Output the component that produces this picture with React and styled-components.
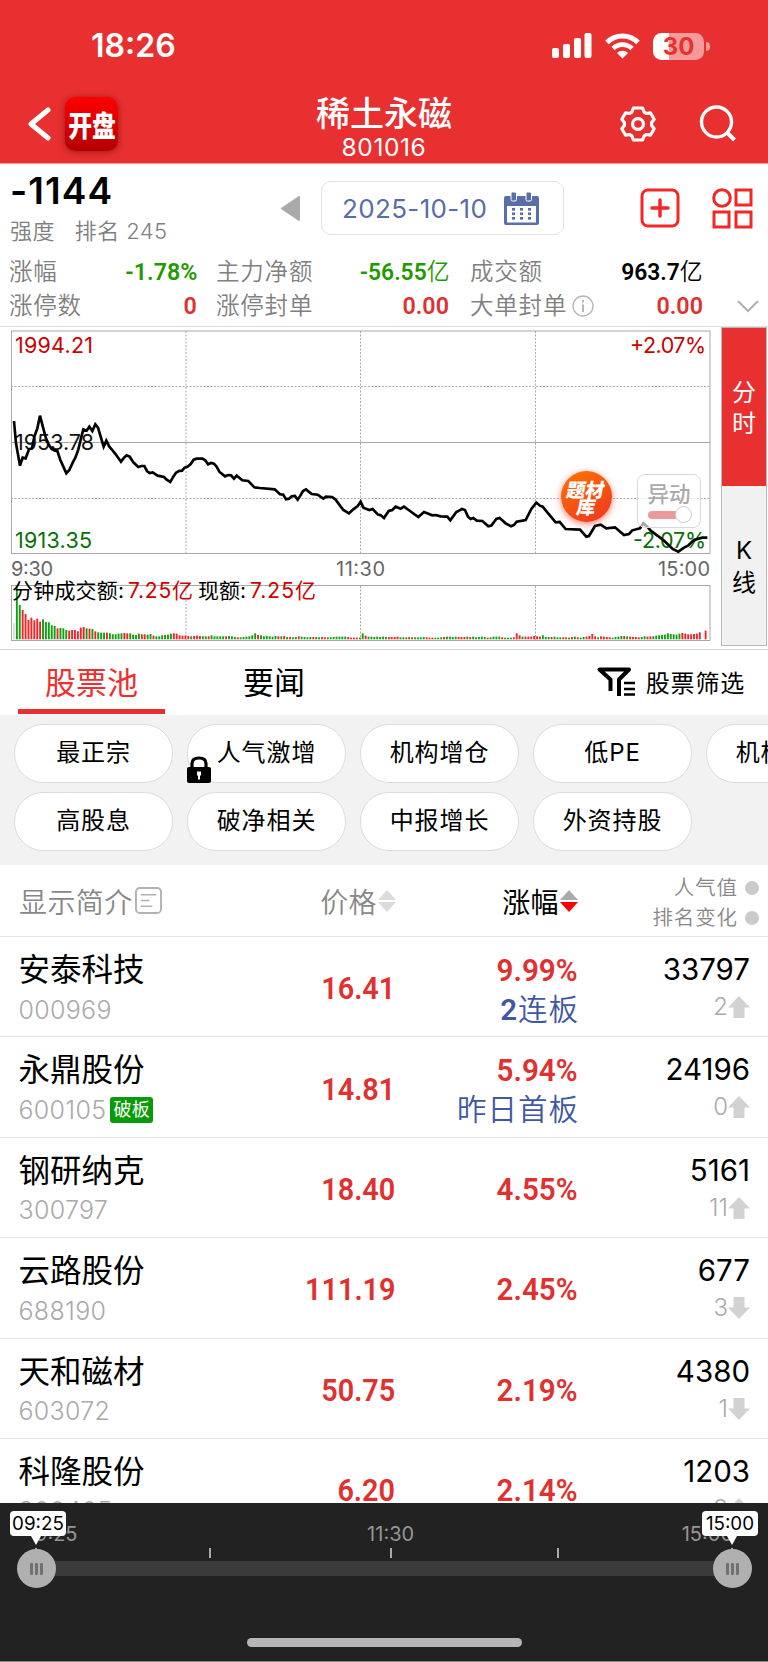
import React from "react";
import styled, { createGlobalStyle } from "styled-components";

const Global = createGlobalStyle`
  * { box-sizing: border-box; }
  body { margin: 0; background: #fff; }
`;

const LATIN = `Inter, "Noto Sans CJK SC", sans-serif`;

const Screen = styled.div`
  width: 768px;
  height: 1662px;
  overflow: hidden;
  display: flex;
  flex-direction: column;
  background: #fff;
  color: #000;
  font-family: ${LATIN};
  white-space: nowrap;
`;

/* ---------- header ---------- */
const Header = styled.header`
  height: 164px;
  flex: none;
  background: #e83030;
  color: #fff;
  border-bottom: 1px solid #f3a0a0;
`;
const StatusBar = styled.div`
  height: 92px;
  padding: 0 58px 0 91px;
  display: flex;
  align-items: center;
  justify-content: space-between;
`;
const Clock = styled.div`
  font-size: 32px;
  font-weight: 600;
  line-height: 40px;
`;
const StatusIcons = styled.div`
  display: flex;
  align-items: center;
  gap: 13px;
`;
const Battery = styled.div`
  width: 51px;
  height: 27px;
  border-radius: 8.5px;
  background: linear-gradient(90deg, #fff 31%, #f59a9a 31%);
  color: #e83030;
  font-size: 24px;
  font-weight: 700;
  line-height: 27px;
  text-align: center;
`;
const BatteryGroup = styled.div`
  display: flex;
  align-items: center;
  gap: 2px;
`;
const BatteryTip = styled.div`
  width: 4px;
  height: 9px;
  border-radius: 0 5px 5px 0;
  background: #f59a9a;
`;
const NavBar = styled.div`
  height: 71px;
  padding: 1px 32px 0 28px;
  display: grid;
  grid-template-columns: 1fr 160px 1fr;
`;
const NavLeft = styled.div`
  display: flex;
  align-items: flex-start;
  padding-top: 4px;
  gap: 14px;
`;
const AppBadge = styled.div`
  width: 53px;
  height: 54px;
  border-radius: 10px;
  background: linear-gradient(#ff0000, #b40000);
  box-shadow: 0 1px 7px rgba(90, 10, 10, 0.55);
  display: flex;
  align-items: center;
  justify-content: center;
  span {
    font: 900 29px/50px "Noto Sans CJK SC", sans-serif;
    transform: scaleX(0.82);
  }
`;
const TitleBlock = styled.div`
  display: flex;
  flex-direction: column;
  align-items: center;
  margin-left: 4px;
  padding-top: 1px;
`;
const Title = styled.h1`
  margin: 0;
  font-size: 34px;
  font-weight: 500;
  line-height: 40px;
`;
const TitleCode = styled.div`
  font-size: 24.5px;
  line-height: 26px;
  letter-spacing: 0.6px;
`;
const NavRight = styled.div`
  display: flex;
  justify-content: flex-end;
  align-items: flex-start;
  padding-top: 12px;
  gap: 42px;
`;

/* ---------- summary ---------- */
const Summary = styled.section`
  height: 162px;
  flex: none;
  padding-top: 8px;
`;
const SummaryTop = styled.div`
  height: 82px;
  display: flex;
  align-items: flex-start;
`;
const Score = styled.div`
  width: 281px;
  padding-left: 10px;
`;
const ScoreValue = styled.div`
  font-size: 37px;
  font-weight: 600;
  letter-spacing: 1.1px;
  line-height: 38px;
`;
const ScoreNote = styled.div`
  display: flex;
  gap: 20px;
  margin-top: 4px;
  font-size: 22px;
  line-height: 34px;
  color: #808080;
  font-weight: 350;
  letter-spacing: 0.4px;
`;
const PrevDay = styled.svg`
  margin: 24px 21px 0 0;
`;
const DateBox = styled.div`
  width: 243px;
  height: 54px;
  margin-top: 9px;
  padding: 0 24px 0 20px;
  border: 1px solid #e2e2e4;
  border-radius: 10px;
  display: flex;
  align-items: center;
  justify-content: space-between;
  font-size: 26px;
  letter-spacing: 0.35px;
  color: #596da6;
`;
const TopAction = styled.svg`
  margin: 16px 0 0 ${(p) => p.$gap}px;
`;
const Stats = styled.div`
  display: grid;
  grid-template-columns: 188px 252px 254px 1fr;
  column-gap: 0;
  padding-left: 9px;
  padding-top: 1px;
  grid-auto-rows: 34px;
`;
const Stat = styled.div`
  display: flex;
  justify-content: space-between;
  align-items: center;
  padding-left: ${(p) => p.$indent || 0}px;
  font-size: 23.5px;
  line-height: 34px;
`;
const StatLabel = styled.span`
  display: flex;
  align-items: center;
  gap: 5px;
  color: #808080;
  font-weight: 350;
  letter-spacing: 0.8px;
`;
const Din = styled.span`
  display: inline-block;
  font-family: Roboto, "Noto Sans CJK SC", sans-serif;
  font-weight: 600;
  font-size: ${(p) => p.$size || 24}px;
  color: ${(p) => p.$color || "#e03030"};
  transform: scaleX(${(p) => p.$scale || 0.97});
  transform-origin: right center;
  i {
    font-style: normal;
    font-weight: 350;
    letter-spacing: 0;
  }
`;
const MoreCell = styled.div`
  grid-column: 4;
  grid-row: 2;
  display: flex;
  align-items: center;
  padding-left: 34px;
`;

/* ---------- chart ---------- */
const ChartPanel = styled.section`
  height: 324px;
  flex: none;
  display: flex;
  border-top: 1px solid #dcdcdc;
  border-bottom: 1px solid #d8d8d8;
`;
const ChartArea = styled.div`
  position: relative;
  width: 721px;
`;
const SideTabs = styled.div`
  width: 46px;
  height: 319px;
  border: 1px solid #bababa;
  display: grid;
  grid-template-rows: 158px 1fr;
`;
const SideTab = styled.div`
  display: flex;
  flex-direction: column;
  align-items: center;
  justify-content: center;
  padding-top: 2px;
  font-size: 24px;
  line-height: 31.5px;
  background: ${(p) => (p.$active ? "#e83030" : "#f1f1f1")};
  color: ${(p) => (p.$active ? "#fff" : "#000")};
`;
const ThemeBall = styled.div`
  position: absolute;
  left: 561px;
  top: 144px;
  width: 51px;
  height: 51px;
  border-radius: 50%;
  background: linear-gradient(150deg, #ff7600, #ee3323);
  box-shadow: 0 2px 7px rgba(240, 60, 30, 0.65);
  color: #fff;
  display: flex;
  flex-direction: column;
  align-items: center;
  justify-content: center;
  font: 900 19px/17px "Noto Sans CJK SC", sans-serif;
  span { transform: skewX(-10deg); }
`;
const MoveSwitch = styled.div`
  position: absolute;
  left: 637px;
  top: 147px;
  width: 64px;
  height: 54px;
  border: 1px solid #d8d8d8;
  border-radius: 8px;
  background: rgba(255, 255, 255, 0.65);
  display: flex;
  flex-direction: column;
  align-items: center;
  color: #aaa;
  font-size: 21.5px;
  font-weight: 500;
  line-height: 38px;
`;
const SwitchTrack = styled.div`
  width: 44px;
  height: 15px;
  margin: -6px 0 0 2px;
  display: flex;
  align-items: center;
  justify-content: flex-end;
  position: relative;
  &::before {
    content: "";
    flex: 1;
    height: 8px;
    margin-right: -3px;
    border-radius: 4px;
    background: #e99a9a;
  }
  &::after {
    content: "";
    width: 15px;
    height: 15px;
    border-radius: 50%;
    border: 1px solid #ccc;
    background: #fff;
    z-index: 1;
  }
`;

/* ---------- tabs and chips ---------- */
const TabRow = styled.nav`
  height: 64.5px;
  flex: none;
  display: flex;
  padding: 0 23px 0 18px;
`;
const Tab = styled.div`
  width: ${(p) => p.$w}px;
  height: 64px;
  text-align: center;
  font-size: 31px;
  line-height: 65px;
  color: ${(p) => (p.$active ? "#ee2f2f" : "#000")};
  border-bottom: ${(p) => (p.$active ? "5px solid #e83030" : "none")};
`;
const FilterButton = styled.div`
  margin-left: auto;
  display: flex;
  align-items: center;
  gap: 10px;
  height: 63px;
  font-size: 24px;
  letter-spacing: 0.8px;
`;
const Chips = styled.div`
  height: 150.5px;
  flex: none;
  overflow: hidden;
  background: #f2f2f2;
  padding: 9px 0 0 14px;
  display: grid;
  grid-template-columns: repeat(5, 159px);
  grid-auto-rows: 59px;
  gap: 9px 14px;
`;
const Chip = styled.div`
  position: relative;
  border: 1px solid #dcdcdc;
  border-radius: 29px;
  background: #fff;
  display: flex;
  align-items: center;
  justify-content: center;
  font-size: 24px;
  letter-spacing: 0.9px;
  line-height: 56px;
  svg {
    position: absolute;
    left: -1px;
    bottom: -1px;
  }
`;

/* ---------- table ---------- */
const COLS = "266px 130px 182px 1fr";
const TableHead = styled.div`
  height: 72px;
  flex: none;
  display: grid;
  grid-template-columns: ${COLS};
  align-items: center;
  border-bottom: 1px solid #e6e6e6;
  font-size: 28px;
  letter-spacing: 0.4px;
  color: #888;
  font-weight: 350;
`;
const HeadCell = styled.div`
  display: flex;
  align-items: center;
  justify-content: ${(p) => (p.$left ? "flex-start" : "flex-end")};
  gap: ${(p) => (p.$left ? 2 : 1)}px;
  padding-left: ${(p) => (p.$left ? 19 : 0)}px;
  color: ${(p) => (p.$on ? "#000" : "inherit")};
  font-weight: ${(p) => (p.$on ? 400 : 350)};
`;
const RankHead = styled.div`
  display: flex;
  flex-direction: column;
  align-items: flex-end;
  padding: 4px 9px 0 0;
  font-size: 20.5px;
  letter-spacing: 0.9px;
  line-height: 30px;
`;
const RankHeadLine = styled.div`
  display: flex;
  align-items: center;
  gap: 7px;
  &::after {
    content: "";
    width: 14px;
    height: 14px;
    border-radius: 50%;
    background: #cbcbcb;
  }
`;
const Rows = styled.div`
  height: 566px;
  flex: none;
  overflow: hidden;
`;
const Row = styled.div`
  height: 100.4px;
  display: grid;
  grid-template-columns: ${COLS};
  border-bottom: 1px solid #e6e6e6;
`;
const NameCell = styled.div`
  padding: 12px 0 0 18.5px;
`;
const StockName = styled.div`
  font-size: 31.5px;
  line-height: 42px;
`;
const StockCode = styled.div`
  display: flex;
  align-items: center;
  gap: 4px;
  height: 37px;
  font-size: 25px;
  font-weight: 350;
  letter-spacing: 0.3px;
  color: #aaa;
`;
const Badge = styled.span`
  width: 43px;
  height: 26px;
  border-radius: 3px;
  background: #079b07;
  color: #fff;
  font-size: 18px;
  font-weight: 400;
  line-height: 25px;
  text-align: center;
`;
const PriceCell = styled.div`
  display: flex;
  align-items: center;
  justify-content: flex-end;
  padding-top: 3px;
  padding-right: 1px;
`;
const ChangeCell = styled.div`
  display: flex;
  flex-direction: column;
  align-items: flex-end;
  justify-content: ${(p) => (p.$tagged ? "flex-start" : "center")};
  padding-top: ${(p) => (p.$tagged ? 13 : 3)}px;
  line-height: 40px;
`;
const Streak = styled.div`
  font-family: Roboto, "Noto Sans CJK SC", sans-serif;
  font-size: 29.5px;
  letter-spacing: 1px;
  margin-right: -1px;
  line-height: 41px;
  font-weight: 350;
  color: #4057a5;
  b { font-weight: 600; }
`;
const HeatCell = styled.div`
  padding: 12px 18px 0 0;
  text-align: right;
`;
const Heat = styled.div`
  font-size: 29.5px;
  line-height: 41px;
`;
const RankMove = styled.div`
  display: flex;
  justify-content: flex-end;
  align-items: center;
  font-size: 24px;
  font-weight: 350;
  line-height: 34px;
  color: #aaa;
`;

/* ---------- time slider ---------- */
const Dock = styled.footer`
  height: 159px;
  flex: none;
  background: #222;
  border-bottom: 1px solid #888;
  position: relative;
`;
const DockLabels = styled.div`
  display: flex;
  justify-content: space-between;
  padding: 20px 35px 0 35px;
  font-size: 20px;
  line-height: 22px;
  color: #959595;
  span:nth-child(2) { margin-left: 22px; }
`;
const Ticks = styled.div`
  display: grid;
  grid-template-columns: 174px 181px 167px 174px 2px;
  margin: 3px 0 0 35px;
  i { width: 2px; height: 10px; background: #aaa; }
`;
const Track = styled.div`
  height: 15px;
  margin: 3px 36px 0;
  background: #3b3b3b;
`;
const Handle = styled.div`
  position: absolute;
  top: 8px;
  left: ${(p) => p.$x}px;
  width: 56px;
  display: flex;
  flex-direction: column;
  align-items: center;
`;
const Bubble = styled.div`
  width: 56px;
  height: 25px;
  margin-left: ${(p) => p.$shift}px;
  border-radius: 4px;
  background: #fff;
  color: #000;
  font-size: 18.8px;
  line-height: 26px;
  text-align: center;
`;
const Pointer = styled.div`
  border: 5.5px solid transparent;
  border-top: 9px solid #fff;
  border-bottom: 0;
`;
const Knob = styled.div`
  width: 39px;
  height: 39px;
  margin-top: 4px;
  border-radius: 50%;
  background: #b0b0b0;
  display: flex;
  align-items: center;
  justify-content: center;
  gap: 2px;
  i { width: 3px; height: 12px; border-radius: 1px; background: #707070; }
`;
const HomeBar = styled.div`
  width: 275px;
  height: 9px;
  border-radius: 5px;
  background: #b6b6b6;
  margin: 62px auto 0;
`;

/* Index path, in thirds of a pixel. */
const PRICE = `42,303 48,370 60,437 68,413 77,415 87,388 96,385 103,350 112,325 120,287 129,322 138,355 147,375 155,387
165,392 172,393 181,420 190,440 199,460 208,450 217,430 226,413 235,388 243,355 250,328 260,332 268,320 277,333 286,313
294,323 302,350 311,380 319,362 328,380 337,390 347,403 363,425 372,413 380,406 389,410 400,427 415,441 424,438 433,438
441,453 449,459 458,457 473,467 492,471 501,480 511,486 520,470 528,458 537,453 546,452 554,443 563,440 572,432 581,419
590,416 607,416 616,421 624,433 633,429 642,431 650,440 658,455 675,469 684,465 693,466 702,476 710,467 727,481 745,483
763,502 780,504 824,508 840,523 850,524 858,538 867,536 875,529 885,528 893,539 901,527 909,513 918,508 926,515 935,522
953,524 970,536 978,530 996,531 1006,538 1030,570 1047,580 1060,568 1073,558 1082,545 1090,563 1108,570 1118,567
1134,584 1142,586 1152,594 1166,573 1177,570 1187,560 1202,566 1212,560 1230,573 1255,591 1272,576 1297,586 1307,585
1322,589 1342,590 1351,601 1369,576 1386,567 1395,570 1404,590 1412,597 1420,594 1430,602 1447,603 1465,619 1474,617
1489,597 1499,594 1517,610 1533,619 1542,615 1550,605 1577,600 1594,567 1609,548 1620,557 1628,560 1642,577 1667,607
1679,606 1697,627 1740,629 1759,650 1767,648 1785,618 1802,614 1819,625 1845,622 1872,645 1887,642 1897,631 1920,625
1930,610 1942,620 1952,632 1990,660 2018,687 2035,695 2052,683 2064,677 2082,660 2107,653 2122,653`;

/* Minute turnover: colour letter followed by bar height in thirds of a pixel. */
const VOLUME = `x48 g157 g103 r88 r76 r58 r65 r57 r62 r53 g60 g52 g51 g42 g40 r33 g34 g33 g28 r26 r28 r28 r24 r35 r37 g33 r32 g31 r24 g21
g20 g20 r20 g18 g15 g15 g17 g18 r19 r18 g18 g14 g13 g17 r15 r15 g14 g16 r11 g9 g9 g12 g13 g14 g17 r18 r17 r12 r11 r11
r10 g9 r10 r11 r10 g9 g9 r9 g12 g9 g9 g9 g9 r9 g10 g9 g7 r6 g6 g7 g8 g9 g12 g18 r13 g12 g9 g10 g9
g8 g10 r9 g9 r10 g7 r7 g6 g7 r9 g8 g7 g6 g7 r7 g7 g6 r7 r6 g6 g6 g7 g8 g8 g8 g8 r7 r5 r5 r5
g5 g18 r11 g8 g8 g7 g8 g7 g8 g7 r7 r7 r7 r8 g6 g6 r6 g7 r6 g6 g6 g6 g7 r6 r5 r5 g5 g5 g6 r7
g8 g8 g7 g8 r7 r7 r7 g8 r7 g8 g6 g7 g8 g7 r5 g6 g8 g8 g8 r6 g5 g5 g5 r6 r18 r12 g8 r8
r8 r8 r10 r9 r8 g12 g7 g7 r7 g8 g6 g6 r6 r6 g5 r7 g8 r6 g5 g7 r8 r10 r16 r9 g6 r9 r8 r7
r6 g5 g7 g8 g10 r10 g9 r8 r7 r7 r6 g7 g9 r8 r9 g9 g11 g12 g13 g14 g18 g16 g15 g14 g17 r19 r17 r15 r15 r16 r17 r21 x0 r26`
  .split(/\s+/);

const BAR_FILL = { r: "#f52525", g: "#12a012", x: "#dddddd" };
const BAR_STEP = 2075 / (VOLUME.length - 1);

function Chart() {
  const dash = { stroke: "#aaa", strokeDasharray: "2 1.5" };
  return (
    <svg width="721" height="322" viewBox="0 327 721 322" fontFamily="Inter, Noto Sans CJK SC, sans-serif" display="block">
      <g fill="none" stroke="#a8a8a8" strokeWidth="1">
        <rect x="11.5" y="331" width="698.5" height="222.5" />
        <path d="M11 442.5H710" />
        <rect x="11.5" y="585.5" width="698.5" height="55" />
        <path {...dash} d="M11 386.5H710M11 498.5H710M186 331V553M360.5 331V553M535.5 331V553M186 586V640M360.5 586V640M535.5 586V640" />
      </g>
      {VOLUME.map((v, i) => {
        const h = Number(v.slice(1)) / 3;
        return <rect key={i} x={13 + (i * BAR_STEP) / 3} y={639.3 - h} width="1.9" height={h} fill={BAR_FILL[v[0]]} />;
      })}
      <g fontSize="21.5">
        <text x="15" y="353" fill="#c00" textLength="78">1994.21</text>
        <text x="15" y="450" fill="#111" textLength="79">1953.78</text>
        <text x="15" y="548" fill="#0a6e0a" textLength="77">1913.35</text>
        <text x="630" y="353" fill="#c00" textLength="76">+2.07%</text>
        <text x="633" y="548" fill="#0a6e0a" textLength="73">-2.07%</text>
      </g>
      <g fontSize="20" fill="#666">
        <text x="11" y="576" textLength="42">9:30</text>
        <text x="336" y="576" textLength="49">11:30</text>
        <text x="658" y="576" textLength="52">15:00</text>
      </g>
      <g fontSize="21">
        <text x="12" y="598" textLength="112">分钟成交额:</text>
        <text x="128" y="598" fill="#d00000" textLength="65">7.25亿</text>
        <text x="198" y="598" textLength="48">现额:</text>
        <text x="250" y="598" fill="#d00000" textLength="66">7.25亿</text>
      </g>
      <g transform="translate(0 320) scale(0.33333)">
        <polyline points={PRICE} fill="none" stroke="#000" strokeWidth="8" strokeLinejoin="miter" />
      </g>
    </svg>
  );
}

const SignalIcon = () => (
  <svg width="40" height="26" viewBox="0 0 40 26" fill="#fff">
    <rect x="0" y="15" width="7" height="10" rx="2" />
    <rect x="11" y="11" width="7" height="14" rx="2" />
    <rect x="22" y="5" width="7" height="20" rx="2" />
    <rect x="32.5" y="0" width="7" height="25" rx="2" />
  </svg>
);
const WifiIcon = () => (
  <svg width="35" height="26" viewBox="0 0 35 26" fill="none" stroke="#fff" strokeWidth="5">
    <path d="M2 9.5a22 22 0 0 1 31 0" />
    <path d="M8 15.5a13.5 13.5 0 0 1 19 0" strokeWidth="4.6" />
    <path d="M17.5 25.5l-5.5-5.500a8 8 0 0 1 11 0z" fill="#fff" stroke="none" />
  </svg>
);
const BackIcon = () => (
  <svg width="23" height="54" viewBox="28 97 23 54" fill="none" stroke="#fff" strokeWidth="5" strokeLinecap="round" strokeLinejoin="round">
    <path d="M48 110L31 124L48 138" />
  </svg>
);
const GearIcon = () => (
  <svg width="38" height="38" viewBox="-19 -19 38 38" fill="none" stroke="#fff" strokeWidth="3.2" strokeLinejoin="round">
    <path d="M-4.600-16H4.600L6.200-11.800L8.400-10.500L12.400-11.200L16.200-4.700L13.600-1.500V1.500L16.200 4.700L12.400 11.200L8.400 10.500L6.200 11.800L4.600 16H-4.600L-6.200 11.800L-8.400 10.500L-12.400 11.200L-16.200 4.700L-13.600 1.500V-1.500L-16.200-4.700L-12.400-11.200L-8.400-10.500L-6.200-11.800z" />
    <circle r="5.400" />
  </svg>
);
const SearchIcon = () => (
  <svg width="37" height="37" viewBox="0 0 37 37" fill="none" stroke="#fff" strokeWidth="3.400">
    <circle cx="17.500" cy="17" r="15" />
    <path d="M28 27.500L35.500 35" strokeWidth="4" />
  </svg>
);
const CalendarIcon = () => (
  <svg width="35" height="33" viewBox="0 0 35 33" fill="#596da6">
    <path fillRule="evenodd" d="M2 4H33a2 2 0 0 1 2 2V31a2 2 0 0 1-2 2H2a2 2 0 0 1-2-2V6a2 2 0 0 1 2-2zM3 14V30.500H32V14z" />
    <rect x="7" y="0" width="5.500" height="9" rx="1.500" stroke="#fff" />
    <rect x="22" y="0" width="5.500" height="9" rx="1.500" stroke="#fff" />
    {[16, 20.500, 25].map((y) => [8, 16, 24].map((x) => <rect key={x + "-" + y} x={x} y={y} width="3" height="2.600" />))}
  </svg>
);
const SortIcon = ({ up, down }) => (
  <svg width="18" height="22" viewBox="0 0 18 22">
    <path d="M9 0L18 10H0z" fill={up} />
    <path d="M0 12H18L9 22z" fill={down} />
  </svg>
);
const LockIcon = () => (
  <svg width="24" height="27" viewBox="0 0 24 27">
    <path d="M5 12V7.500Q5 2 12 2T19 7.500V12" fill="none" stroke="#000" strokeWidth="3.200" />
    <rect y="11" width="24" height="16" rx="2" />
    <path d="M10 15.500h4v4h-1v4h-2v-4h-1z" fill="#fff" />
  </svg>
);
const FunnelIcon = () => (
  <svg width="39" height="30" viewBox="0 0 39 30" fill="none" stroke="#000" strokeWidth="4">
    <path d="M13.500 24V12.500L2.500 2.500H32L22 12.500V29" strokeLinejoin="round" />
    <path d="M27 16H38M27 22H38M27 27.500H38" strokeWidth="2.600" />
  </svg>
);
const NoteIcon = () => (
  <svg width="27" height="27" viewBox="0 0 28 28" fill="none" stroke="#b2b2b2" strokeWidth="2">
    <rect x="1" y="1" width="26" height="26" rx="4" />
    <path d="M6 8H22M6 14H15M6 20H18" strokeWidth="1.700" />
  </svg>
);
const MoveArrow = ({ down }) => (
  <svg width="22" height="22" viewBox="0 0 22 22" fill="#d2d2d2">
    <path d={down ? "M11 22L0 10.500H5.500V0H16.500V10.500H22z" : "M11 0L22 11.500H16.500V22H5.500V11.500H0z"} />
  </svg>
);

const STATS = [
  { label: "涨幅", value: "-1.78%", color: "#1f9a00" },
  { label: "主力净额", value: "-56.55", unit: "亿", color: "#1f9a00", indent: 19, scale: 0.95 },
  { label: "成交额", value: "963.7", unit: "亿", color: "#000", indent: 21, scale: 0.95 },
  { label: "涨停数", value: "0" },
  { label: "涨停封单", value: "0.00", indent: 19 },
  { label: "大单封单", value: "0.00", indent: 21, info: true },
];

const CHIPS = ["最正宗", "人气激增", "机构增仓", "低PE", "机构新进", "高股息", "破净相关", "中报增长", "外资持股"];

const STOCKS = [
  { name: "安泰科技", code: "000969", price: "16.41", pct: "9.99%", lead: "2", tag: "连板", heat: "33797", move: "2" },
  { name: "永鼎股份", code: "600105", badge: "破板", price: "14.81", pct: "5.94%", tag: "昨日首板", heat: "24196", move: "0" },
  { name: "钢研纳克", code: "300797", price: "18.40", pct: "4.55%", heat: "5161", move: "11" },
  { name: "云路股份", code: "688190", price: "111.19", pct: "2.45%", heat: "677", move: "3", down: true },
  { name: "天和磁材", code: "603072", price: "50.75", pct: "2.19%", heat: "4380", move: "1", down: true },
  { name: "科隆股份", code: "300405", price: "6.20", pct: "2.14%", heat: "1203", move: "9" },
];

const TimeHandle = ({ x, shift, label }) => (
  <Handle $x={x}>
    <Bubble $shift={shift}>{label}</Bubble>
    <Pointer />
    <Knob><i /><i /><i /></Knob>
  </Handle>
);

export default function App() {
  return (
    <Screen>
      <Global />
      <Header>
        <StatusBar>
          <Clock>18:26</Clock>
          <StatusIcons>
            <SignalIcon />
            <WifiIcon />
            <BatteryGroup><Battery>30</Battery><BatteryTip /></BatteryGroup>
          </StatusIcons>
        </StatusBar>
        <NavBar>
          <NavLeft>
            <BackIcon />
            <AppBadge><span>开盘</span></AppBadge>
          </NavLeft>
          <TitleBlock>
            <Title>稀土永磁</Title>
            <TitleCode>801016</TitleCode>
          </TitleBlock>
          <NavRight><GearIcon /><SearchIcon /></NavRight>
        </NavBar>
      </Header>

      <Summary>
        <SummaryTop>
          <Score>
            <ScoreValue>-1144</ScoreValue>
            <ScoreNote><span>强度</span><span>排名 245</span></ScoreNote>
          </Score>
          <PrevDay width="19" height="25" viewBox="0 0 19 25">
            <path d="M1 12.500L18 1V24z" fill="#aaa" stroke="#aaa" strokeWidth="2" strokeLinejoin="round" />
          </PrevDay>
          <DateBox><span>2025-10-10</span><CalendarIcon /></DateBox>
          <TopAction $gap={76} width="40" height="40" viewBox="0 0 40 40" fill="none" stroke="#f02828">
            <rect x="2" y="2" width="36" height="36" rx="6" strokeWidth="3" />
            <path d="M12 20H28M20 12V28" strokeWidth="3.500" strokeLinecap="round" />
          </TopAction>
          <TopAction $gap={32} width="41" height="41" viewBox="0 0 41 41" fill="none" stroke="#f02828" strokeWidth="3">
            <circle cx="10" cy="10" r="8.300" />
            <rect x="24" y="2" width="15" height="15" />
            <rect x="2" y="24" width="15" height="15" />
            <rect x="24" y="24" width="15" height="15" />
          </TopAction>
        </SummaryTop>
        <Stats>
          {STATS.map((s, i) => (
            <Stat key={s.label} $indent={s.indent} style={{ gridColumn: (i % 3) + 1 }}>
              <StatLabel>
                {s.label}
                {s.info && (
                  <svg width="22" height="22" viewBox="0 0 22 22" fill="none" stroke="#b8b8b8" strokeWidth="1.400">
                    <circle cx="11" cy="11" r="10" />
                    <path d="M11 5V7.500M11 9.500V17" strokeWidth="2" />
                  </svg>
                )}
              </StatLabel>
              <Din $color={s.color} $scale={s.scale}>{s.value}{s.unit && <i>{s.unit}</i>}</Din>
            </Stat>
          ))}
          <MoreCell>
            <svg width="22" height="13" viewBox="0 0 22 13" fill="none" stroke="#b0b0b0" strokeWidth="2">
              <path d="M1 1L11 11L21 1" />
            </svg>
          </MoreCell>
        </Stats>
      </Summary>

      <ChartPanel>
        <ChartArea>
          <Chart />
          <ThemeBall><span>题材</span><span>库</span></ThemeBall>
          <MoveSwitch>异动<SwitchTrack /></MoveSwitch>
        </ChartArea>
        <SideTabs>
          <SideTab $active><span>分</span><span>时</span></SideTab>
          <SideTab><span>K</span><span>线</span></SideTab>
        </SideTabs>
      </ChartPanel>

      <TabRow>
        <Tab $w={147} $active>股票池</Tab>
        <Tab $w={218}>要闻</Tab>
        <FilterButton><FunnelIcon />股票筛选</FilterButton>
      </TabRow>
      <Chips>
        {CHIPS.map((c, i) => (
          <Chip key={c}>{c}{i === 1 && <LockIcon />}</Chip>
        ))}
      </Chips>

      <TableHead>
        <HeadCell $left>显示简介<NoteIcon /></HeadCell>
        <HeadCell>价格<SortIcon up="#dcdcdc" down="#dcdcdc" /></HeadCell>
        <HeadCell $on>涨幅<SortIcon up="#aaa" down="#ff0000" /></HeadCell>
        <RankHead>
          <RankHeadLine>人气值</RankHeadLine>
          <RankHeadLine>排名变化</RankHeadLine>
        </RankHead>
      </TableHead>
      <Rows>
        {STOCKS.map((s) => (
          <Row key={s.code}>
            <NameCell>
              <StockName>{s.name}</StockName>
              <StockCode>{s.code}{s.badge && <Badge>{s.badge}</Badge>}</StockCode>
            </NameCell>
            <PriceCell><Din $size={32} $scale={0.9}>{s.price}</Din></PriceCell>
            <ChangeCell $tagged={Boolean(s.tag)}>
              <Din $size={32} $scale={0.925}>{s.pct}</Din>
              {s.tag && <Streak>{s.lead && <b>{s.lead}</b>}{s.tag}</Streak>}
            </ChangeCell>
            <HeatCell>
              <Heat>{s.heat}</Heat>
              <RankMove>{s.move}<MoveArrow down={s.down} /></RankMove>
            </HeatCell>
          </Row>
        ))}
      </Rows>

      <Dock>
        <DockLabels><span>9:25</span><span>11:30</span><span>15:00</span></DockLabels>
        <Ticks><i /><i /><i /><i /><i /></Ticks>
        <Track />
        <HomeBar />
        <TimeHandle x={8} shift={4} label="09:25" />
        <TimeHandle x={704} shift={-4} label="15:00" />
      </Dock>
    </Screen>
  );
}
